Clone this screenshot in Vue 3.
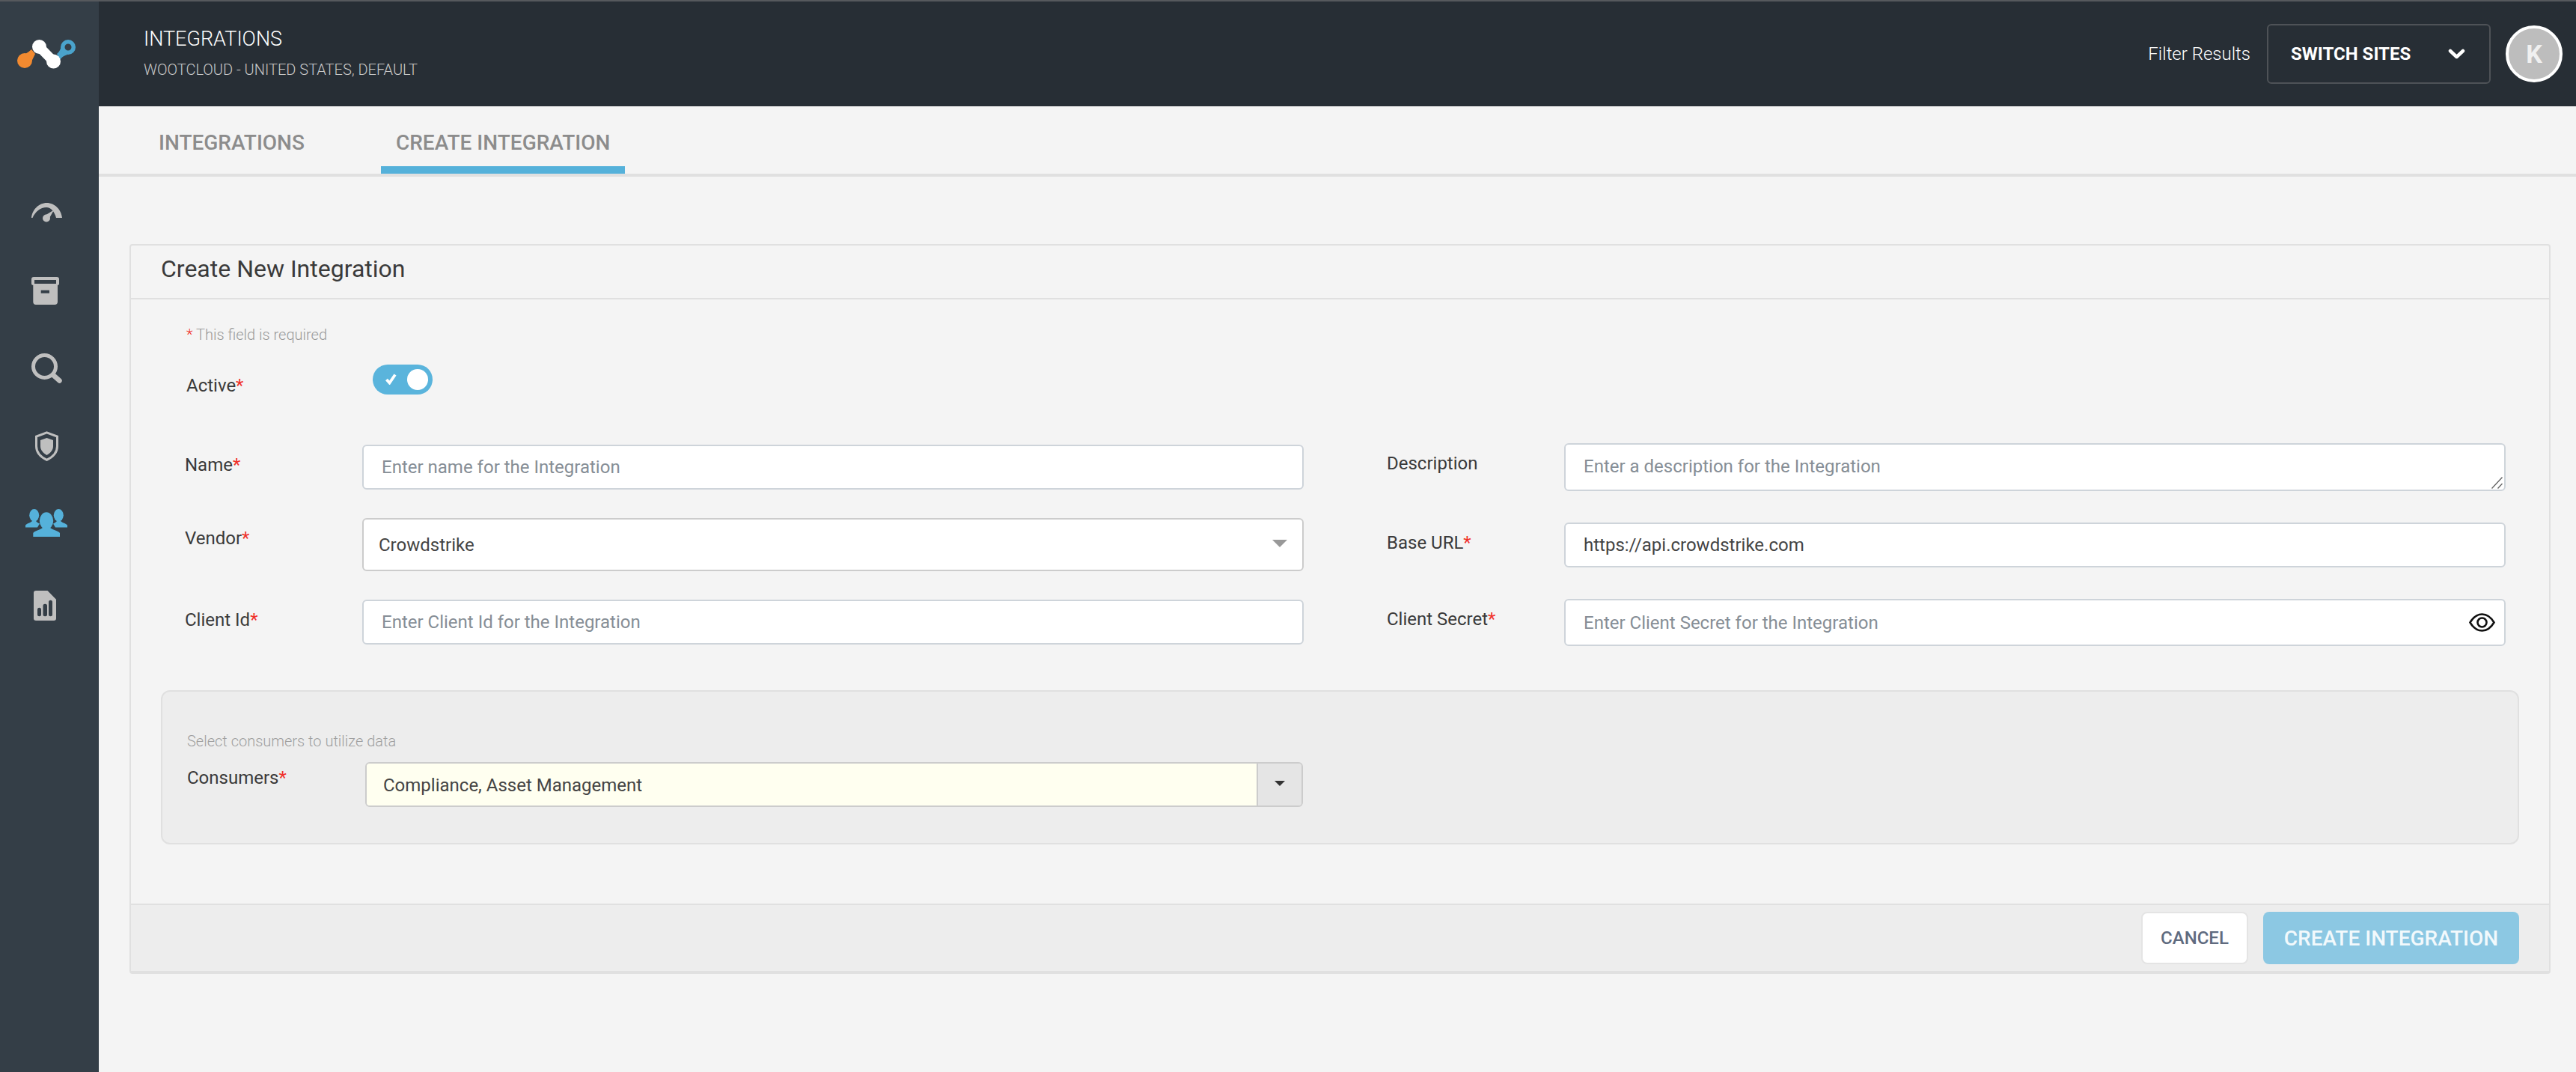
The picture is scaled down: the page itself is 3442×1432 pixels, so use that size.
<template>
  <div class="app">
    <div class="topline"></div>
    <div class="shell">
      <aside class="sidebar">
        <div class="logo">
          <svg width="78" height="39" viewBox="0 0 78 39">
            <path d="M2 22 Q12 20 19 13 L24 19 Q20 28 16 34 Z" fill="#f28a30" />
            <circle cx="10" cy="28" r="10" fill="#f28a30" />
            <path d="M59 9 Q57 16 53 19 L57 27 Q60 22 67 20 Z" fill="#4aa3cc" />
            <circle cx="68" cy="10" r="7.25" fill="none" stroke="#4aa3cc" stroke-width="5.5" />
            <path d="M29.5 9.5 L48.5 29" stroke="#fff" stroke-width="13" fill="none" />
            <circle cx="29.5" cy="9.5" r="9.5" fill="#fff" />
            <circle cx="48.5" cy="29" r="9.5" fill="#fff" />
          </svg>
        </div>
        <nav class="nav">
          <a v-for="item in navItems" :key="item.name" class="nav-item" :class="{ active: item.active }">
            <svg v-if="item.name === 'gauge'" width="41" height="26" viewBox="0 0 41 26" fill="currentColor">
              <path d="M0 20 C1 9 10 0 20.5 0 C31 0 40 9 41 20 H33 C31 12 26 6 20 6 C12 6 5 12 1.5 20 Z" />
              <circle cx="20" cy="20.5" r="5" />
              <path d="M17 17.5 L30 9.5 L23 22 Z" />
            </svg>
            <svg v-else-if="item.name === 'box'" width="41" height="37" viewBox="0 0 41 37" fill="currentColor">
              <path d="M3 0 H34 Q37 0 37 3 V9 Q37 11 35 11 V33 Q35 37 31 37 H6 Q2.3 37 2.3 33 V11 Q0 11 0 9 V3 Q0 0 3 0 Z" />
              <rect x="4" y="4" width="29" height="5" fill="#343e47" />
              <rect x="12.7" y="17.7" width="11.3" height="4" fill="#343e47" />
            </svg>
            <svg v-else-if="item.name === 'search'" width="41" height="40" viewBox="0 0 41 40">
              <circle cx="17.5" cy="17.5" r="15" fill="none" stroke="currentColor" stroke-width="5" />
              <path d="M29 29 L37.5 36.5" stroke="currentColor" stroke-width="6.5" stroke-linecap="round" />
            </svg>
            <svg v-else-if="item.name === 'shield'" width="31" height="40" viewBox="0 0 31 40">
              <path d="M15.5 1.8 L29.5 7 V20 C29.5 29 22.5 35 15.5 38.3 C8.5 35 1.5 29 1.5 20 V7 Z" fill="none" stroke="currentColor" stroke-width="3" />
              <path d="M15.5 9 L24 12 V20 C24 26 19.5 29.5 15.5 32 C11.5 29.5 7 26 7 20 V12 Z" fill="currentColor" />
            </svg>
            <svg v-else-if="item.name === 'users'" width="56" height="37" viewBox="0 0 56 37" fill="currentColor">
              <ellipse cx="11.7" cy="8.3" rx="6.5" ry="8.3" />
              <path d="M0 24.5 V21.5 C2 19 7 18.5 9 16 H14 C15.5 18 17.5 19 19 19.5 L16 24.5 Z" />
              <ellipse cx="44.3" cy="8.3" rx="6.5" ry="8.3" />
              <path d="M56 24.5 V21.5 C54 19 49 18.5 47 16 H42 C40.5 18 38.5 19 37 19.5 L40 24.5 Z" />
              <ellipse cx="28" cy="15.7" rx="9.2" ry="11.4" />
              <path d="M10.3 37 V32 C12 29 18 28.5 23 25 H33 C38 28.5 44 29 46 32 V37 Z" />
            </svg>
            <svg v-else width="34" height="40" viewBox="0 0 34 40" fill="currentColor">
              <path d="M3 0 H18.5 L30 11.7 V37 Q30 40 27 40 H3 Q0 40 0 37 V3 Q0 0 3 0 Z" />
              <rect x="5" y="22.7" width="5" height="11.6" rx="2.5" fill="#343e47" />
              <rect x="12.5" y="17.7" width="5.5" height="16.6" rx="2.5" fill="#343e47" />
              <rect x="20" y="12.7" width="5" height="21.6" rx="2.5" fill="#343e47" />
            </svg>
          </a>
        </nav>
      </aside>

      <div class="main">
        <header class="header">
          <div class="heading">
            <div class="heading-title">INTEGRATIONS</div>
            <div class="heading-sub">WOOTCLOUD - UNITED STATES, DEFAULT</div>
          </div>
          <div class="header-right">
            <span class="filter-label">Filter Results</span>
            <div class="switch">
              <span>SWITCH SITES</span>
              <svg width="23" height="14" viewBox="0 0 23 14">
                <path d="M3 3 L11.5 11 L20 3" fill="none" stroke="#fff" stroke-width="4.5" stroke-linecap="round" stroke-linejoin="round" />
              </svg>
            </div>
            <div class="avatar">K</div>
          </div>
        </header>

        <div class="tabs">
          <a class="tab">INTEGRATIONS</a>
          <a class="tab tab-active">CREATE INTEGRATION</a>
        </div>

        <section class="card">
          <h2 class="card-title">Create New Integration</h2>
          <div class="card-body">
            <p class="hint"><span class="req">*</span> This field is required</p>
            <div class="active-row">
              <label class="active-label">Active<span class="req">*</span></label>
              <div class="toggle">
                <svg width="17" height="15" viewBox="0 0 17 15">
                  <path d="M2.5 8 L6.5 12.5 L14 1.5" fill="none" stroke="#fff" stroke-width="3.8" />
                </svg>
                <span class="knob"></span>
              </div>
            </div>

            <div class="columns">
              <div class="col col-left">
                <div class="field">
                  <label>Name<span class="req">*</span></label>
                  <input class="input" placeholder="Enter name for the Integration" />
                </div>
                <div class="field">
                  <label>Vendor<span class="req">*</span></label>
                  <div class="select">
                    <span>Crowdstrike</span>
                    <i class="select-arrow"></i>
                  </div>
                </div>
                <div class="field">
                  <label>Client Id<span class="req">*</span></label>
                  <input class="input" placeholder="Enter Client Id for the Integration" />
                </div>
              </div>
              <div class="col col-right">
                <div class="field">
                  <label>Description</label>
                  <div class="area-wrap">
                    <textarea class="input area" placeholder="Enter a description for the Integration"></textarea>
                    <svg class="grip" width="15" height="16" viewBox="0 0 15 16">
                      <path d="M0.5 15.5 L14.5 0.5 M8.5 15.5 L14.5 9" stroke="#666" stroke-width="1.4" fill="none" />
                    </svg>
                  </div>
                </div>
                <div class="field">
                  <label>Base URL<span class="req">*</span></label>
                  <input class="input" value="https://api.crowdstrike.com" />
                </div>
                <div class="field">
                  <label>Client Secret<span class="req">*</span></label>
                  <div class="secret">
                    <input class="input secret-input" placeholder="Enter Client Secret for the Integration" />
                    <svg class="eye" width="35" height="25" viewBox="0 0 35 25">
                      <path d="M1.5 12.5 C6 5 11 1.5 17.5 1.5 C24 1.5 29 5 33.5 12.5 C29 20 24 23.5 17.5 23.5 C11 23.5 6 20 1.5 12.5 Z" fill="none" stroke="#111" stroke-width="2.6" />
                      <circle cx="17.5" cy="12.5" r="6" fill="none" stroke="#111" stroke-width="2.6" />
                    </svg>
                  </div>
                </div>
              </div>
            </div>

            <div class="consumers">
              <p class="consumers-hint">Select consumers to utilize data</p>
              <div class="consumers-row">
                <label>Consumers<span class="req">*</span></label>
                <div class="combo">
                  <span class="combo-value">Compliance, Asset Management</span>
                  <span class="combo-btn"><i></i></span>
                </div>
              </div>
            </div>
          </div>
          <footer class="card-footer">
            <button class="btn btn-cancel">CANCEL</button>
            <button class="btn btn-create">CREATE INTEGRATION</button>
          </footer>
        </section>
      </div>
    </div>
  </div>
</template>

<script setup>
const navItems = [
  { name: "gauge" },
  { name: "box" },
  { name: "search" },
  { name: "shield" },
  { name: "users", active: true },
  { name: "report" },
];
</script>

<style>
html, body { margin: 0; background: #f4f4f4; }
</style>

<style scoped>
.app { width: 3442px; height: 1432px; overflow: hidden; font-family: Roboto, "Liberation Sans", sans-serif; background: #f4f4f4; color: #333; }
.topline { height: 2px; background: #56595d; }
.shell { display: flex; height: 1430px; }

.sidebar { width: 132px; flex: none; background: #343e47; }
.logo { padding: 51px 0 0 23px; height: 230px; box-sizing: border-box; }
.nav { display: flex; flex-direction: column; width: 124px; }
.nav-item { height: 104px; display: flex; align-items: center; justify-content: center; color: #bfbfbf; }
.nav-item.active { color: #55b1da; margin-top: -2px; }
.nav-item:last-child { margin-top: 7px; }

.main { flex: 1; min-width: 0; }
.header { height: 140px; background: #272e35; display: flex; justify-content: space-between; align-items: flex-start; padding: 0 18px 0 60px; }
.heading { padding-top: 34px; }
.heading-title { font-size: 27px; line-height: 32px; color: #fff; font-weight: 300; }
.heading-sub { font-size: 20px; line-height: 24px; margin-top: 13px; color: #c8c8c8; font-weight: 300; }
.header-right { display: flex; align-items: center; height: 140px; }
.filter-label { font-size: 24px; font-weight: 300; color: #fff; margin-right: 22px; }
.switch { width: 299px; height: 80px; box-sizing: border-box; border: 2px solid #4e5257; border-radius: 6px; display: flex; align-items: center; justify-content: space-between; padding: 0 32px 0 30px; font-size: 24px; font-weight: 700; color: #fff; }
.avatar { width: 76px; height: 76px; box-sizing: border-box; margin-left: 20px; border-radius: 50%; background: #bdbdbd; border: 4px solid #fff; color: #f0f0f0; font-size: 34px; font-weight: 700; display: flex; align-items: center; justify-content: center; }

.tabs { height: 90px; border-bottom: 4px solid #e0e0e0; display: flex; padding-left: 60px; gap: 82px; }
.tab { padding: 32px 20px 0; height: 90px; box-sizing: border-box; line-height: 34px; font-size: 28px; font-weight: 500; color: #8c8c8c; }
.tab-active { border-bottom: 10px solid #55b1da; }

.card { margin: 90px 34px 0 41px; border: 2px solid #e0e0e0; border-bottom-width: 4px; border-radius: 4px; }
.card-title { margin: 0; height: 70px; line-height: 62px; padding-left: 40px; border-bottom: 2px solid #e0e0e0; font-size: 32px; font-weight: 400; color: #3a3a3a; }
.card-body { height: 807px; box-sizing: border-box; padding-top: 35px; }
.req { color: #f0302a; }
.hint { margin: 0 0 0 74px; font-size: 20px; line-height: 24px; color: #9a9a9a; font-weight: 300; }
.active-row { display: flex; margin: 28px 0 0 74px; height: 40px; }
.active-label { width: 249px; font-size: 24px; line-height: 56px; color: #3a3a3a; }
.toggle { width: 80px; height: 40px; border-radius: 20px; background: #5ab4dc; position: relative; display: flex; align-items: center; padding-left: 16px; box-sizing: border-box; }
.toggle svg { margin-top: -2px; }
.knob { position: absolute; right: 6px; top: 6px; width: 28px; height: 28px; border-radius: 50%; background: #fff; }

.columns { display: flex; gap: 111px; padding: 0 58px 0 72px; margin-top: 65px; }
.col { flex: 1; min-width: 0; display: flex; flex-direction: column; }
.col-left { padding-top: 2px; gap: 38px; }
.col-right { gap: 42px; }
.field { display: flex; align-items: flex-start; }
.field label, .consumers-row label { flex: none; font-size: 24px; line-height: 30px; color: #3a3a3a; }
.field label { width: 237px; padding-top: 12px; }
.input { flex: 1; min-width: 0; width: 100%; height: 60px; box-sizing: border-box; border: 2px solid #ced4da; border-radius: 6px; background: #fff; padding: 0 24px; font-family: inherit; font-size: 24px; color: #444; outline: none; }
.input::placeholder { color: #868e96; opacity: 1; }
.area-wrap { flex: 1; min-width: 0; position: relative; }
.area { height: 64px; line-height: 30px; padding-top: 14px; resize: none; display: block; }
.grip { position: absolute; right: 4px; bottom: 3px; }
.select { flex: 1; height: 71px; box-sizing: border-box; border: 2px solid #ccc; border-radius: 6px; background: #fff; display: flex; align-items: center; justify-content: space-between; padding: 0 20px 0 20px; font-size: 24px; color: #444; }
.select-arrow { width: 0; height: 0; border-left: 10px solid transparent; border-right: 10px solid transparent; border-top: 10px solid #999; margin-top: -4px; }
.secret { flex: 1; min-width: 0; position: relative; }
.secret-input { height: 63px; padding-right: 60px; display: block; }
.eye { position: absolute; right: 14px; top: 19px; }

.consumers { margin: 59px 40px 0 40px; height: 206px; box-sizing: border-box; background: #ededed; border: 2px solid #e0e0e0; border-radius: 12px; padding: 54px 0 0 33px; }
.consumers-hint { margin: 0; font-size: 20px; line-height: 24px; color: #a0a0a0; font-weight: 300; }
.consumers-row { display: flex; align-items: flex-start; margin-top: 16px; }
.consumers-row label { width: 238px; padding-top: 6px; }
.combo { width: 1253px; height: 60px; box-sizing: border-box; border: 2px solid #ccc; border-radius: 6px; display: flex; overflow: hidden; }
.combo-value { flex: 1; background: #fffff0; padding-left: 22px; font-size: 24px; line-height: 58px; color: #444; }
.combo-btn { width: 58px; background: #e5e5e5; border-left: 2px solid #ccc; display: flex; align-items: center; justify-content: center; }
.combo-btn i { width: 0; height: 0; border-left: 7px solid transparent; border-right: 7px solid transparent; border-top: 7px solid #333; margin-top: -3px; }

.card-footer { height: 90px; box-sizing: border-box; border-top: 2px solid #e0e0e0; background: #ededed; display: flex; justify-content: flex-end; align-items: flex-start; gap: 20px; padding: 9px 40px 0 0; }
.btn { height: 70px; box-sizing: border-box; border-radius: 8px; font-family: inherit; font-weight: 500; }
.btn-cancel { width: 143px; background: #fff; border: 2px solid #e4e4e4; color: #5f6b7f; font-size: 24px; padding: 0; }
.btn-create { width: 342px; background: #8cc8e3; border: none; color: #f2f9fc; font-size: 28px; padding: 0; }
</style>
